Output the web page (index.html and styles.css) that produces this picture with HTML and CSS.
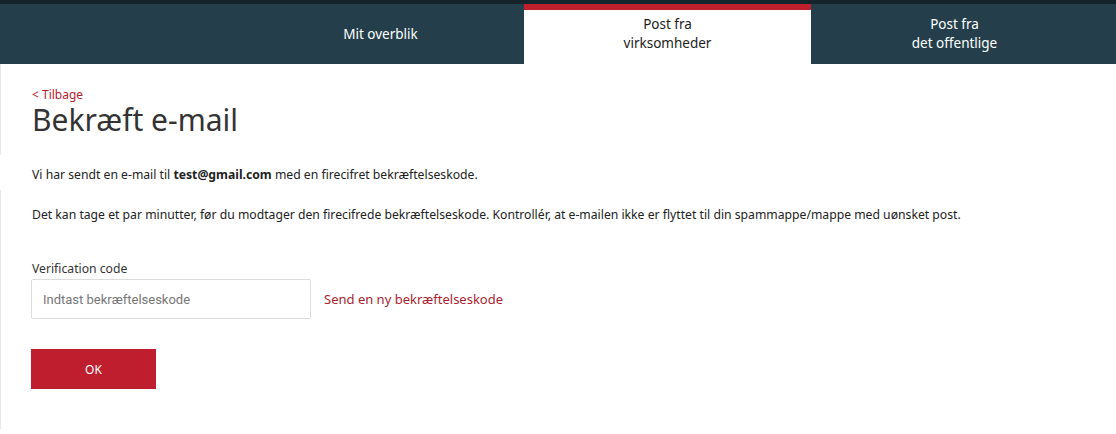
FILE: index.html
```
<!DOCTYPE html>
<html lang="da">
<head>
<meta charset="utf-8">
<title>Bekræft e-mail</title>
<link rel="stylesheet" href="styles.css">
</head>
<body>
<header class="topbar">
  <nav class="tabs">
    <a class="tab" href="#">Mit overblik</a>
    <a class="tab active" href="#">Post fra<br>virksomheder</a>
    <a class="tab" href="#">Post fra<br>det offentlige</a>
  </nav>
</header>
<main class="page">
  <section class="intro">
    <a class="back" href="#">&lt; Tilbage</a>
    <h1 class="title">Bekræft e-mail</h1>
  </section>
  <section class="notice">
    <p class="text">Vi har sendt en e-mail til <strong>test@gmail.com</strong> med en firecifret bekræftelseskode.</p>
  </section>
  <section class="content">
    <p class="text">Det kan tage et par minutter, før du modtager den firecifrede bekræftelseskode. Kontrollér, at e-mailen ikke er flyttet til din spammappe/mappe med uønsket post.</p>
    <label class="label" for="code">Verification code</label>
    <div class="field-row">
      <input class="input" id="code" type="text" placeholder="Indtast bekræftelseskode">
      <a class="resend" href="#">Send en ny bekræftelseskode</a>
    </div>
    <button class="btn" type="button">OK</button>
  </section>
</main>
</body>
</html>
```
FILE: styles.css
```
* { box-sizing: border-box; }
html, body { margin: 0; padding: 0; background: #fff; }
body {
  font-family: "Noto Sans", "Open Sans", "Liberation Sans", sans-serif;
  color: #222;
  font-size: 12.2px;
}
.topbar {
  background: #243f4b;
  border-top: 4px solid #15232b;
  height: 64px;
}
.tabs {
  display: flex;
  justify-content: flex-end;
  padding-right: 18px;
  height: 60px;
}
.tab {
  width: 287px;
  display: flex;
  align-items: center;
  justify-content: center;
  text-align: center;
  color: #fff;
  text-decoration: none;
  font-size: 13.5px;
  line-height: 19px;
}
.tab.active {
  background: #fff;
  color: #222;
  border-top: 6px solid #c01f2e;
  padding-bottom: 6px;
}
.intro {
  border-left: 1px solid #e8e8e8;
  padding: 25px 0 0 31px;
  height: 91px;
}
.back {
  display: block;
  color: #b5202e;
  text-decoration: none;
  font-size: 12px;
  line-height: 12px;
}
.title {
  margin: 1px 0 0;
  font-weight: 400;
  font-size: 30px;
  line-height: 36px;
  color: #333;
}
.notice {
  height: 35px;
  padding: 11px 0 0 32px;
}
.content {
  border-left: 1px solid #e8e8e8;
  padding: 16px 0 40px 31px;
}
.text {
  margin: 0;
  line-height: 18px;
  font-size: 12.2px;
}
.label {
  display: block;
  margin-top: 37px;
  font-size: 12.2px;
  line-height: 16px;
  color: #333;
}
.field-row {
  display: flex;
  align-items: center;
  gap: 13px;
  margin-top: 2px;
  margin-left: -1px;
}
.input {
  width: 280px;
  height: 40px;
  border: 1px solid #dcdcdc;
  border-radius: 2px;
  padding: 0 11px;
  font-family: "Roboto", "Liberation Sans", sans-serif;
  font-size: 13px;
  color: #333;
  outline: none;
}
.input::placeholder { color: #777; }
.resend {
  color: #a8232f;
  text-decoration: none;
  font-size: 13px;
}
.btn {
  display: block;
  margin: 30px 0 0 -1px;
  width: 125px;
  height: 40px;
  border: 0;
  border-radius: 0;
  background: #be1e2d;
  color: #fff;
  font-family: "Noto Sans", "Liberation Sans", sans-serif;
  font-size: 12px;
}
```
